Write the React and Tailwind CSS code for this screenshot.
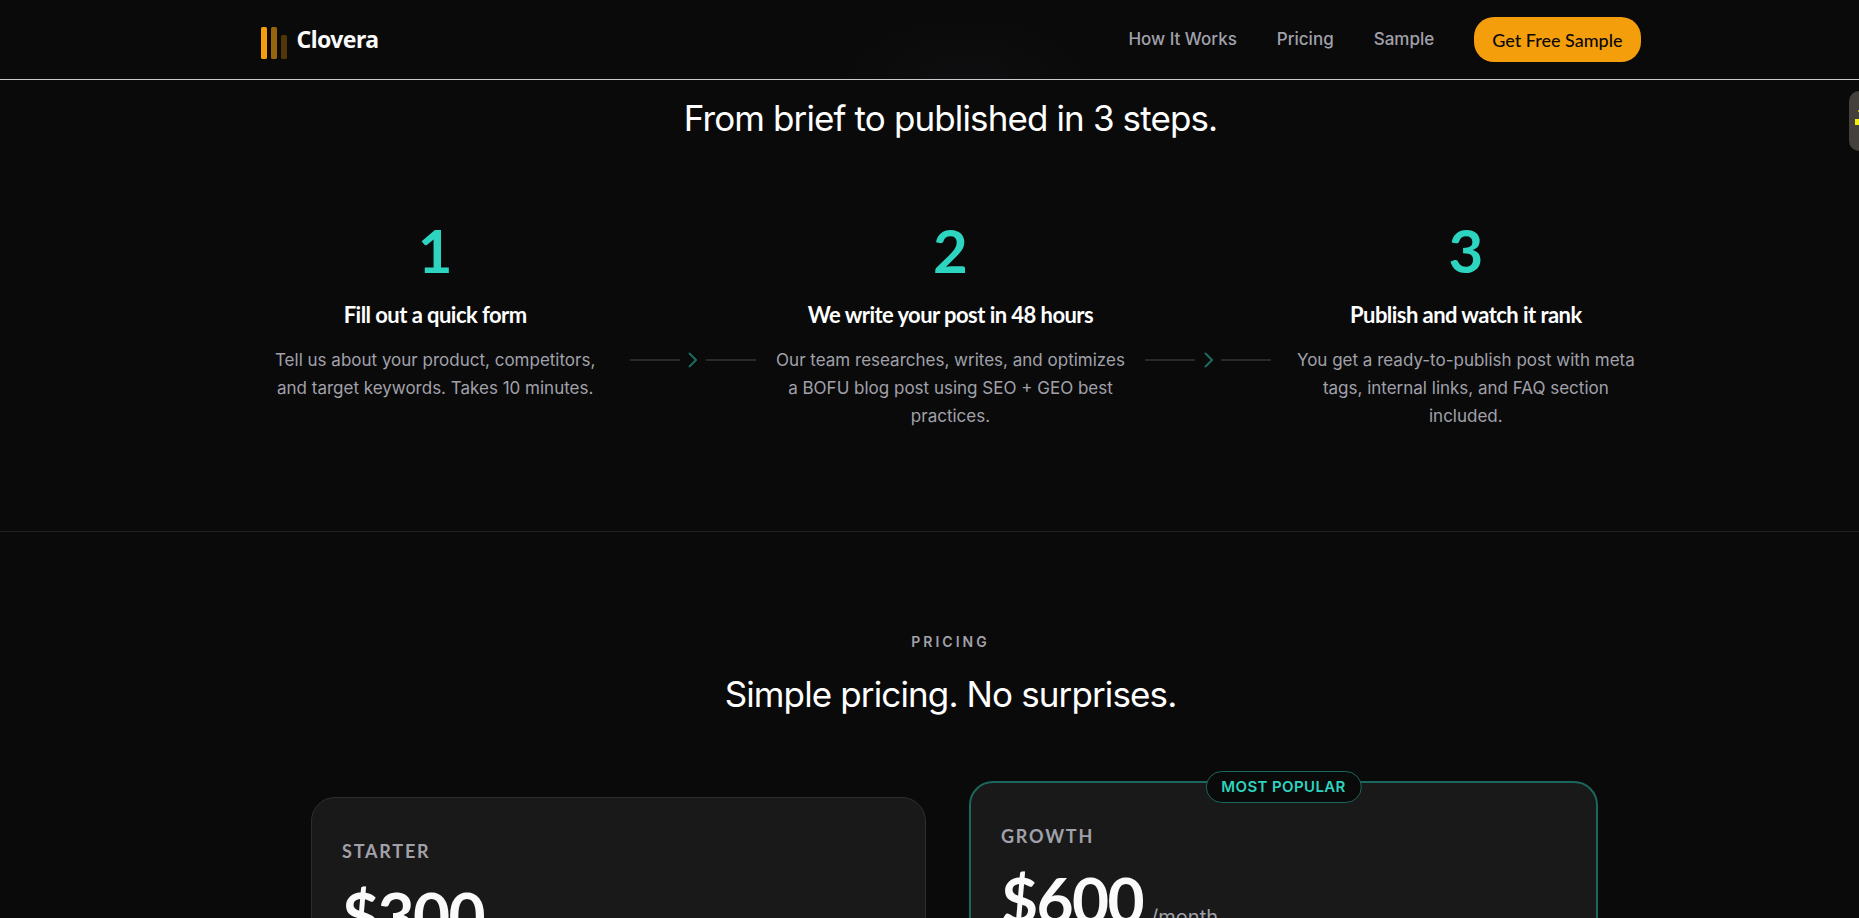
import { Fragment } from "react";
import clsx from "clsx";

const navLinks = [
  { label: "How It Works", href: "#how-it-works" },
  { label: "Pricing", href: "#pricing" },
  { label: "Sample", href: "#sample" },
];

const steps = [
  {
    title: "Fill out a quick form",
    text: "Tell us about your product, competitors, and target keywords. Takes 10 minutes.",
  },
  {
    title: "We write your post in 48 hours",
    text: "Our team researches, writes, and optimizes a BOFU blog post using SEO + GEO best practices.",
  },
  {
    title: "Publish and watch it rank",
    text: "You get a ready-to-publish post with meta tags, internal links, and FAQ section included.",
  },
];

const Logo = () => (
  <a href="#top" className="flex items-center gap-2.5">
    <svg width="26" height="32" viewBox="0 0 26 32" className="mt-1.5" aria-hidden="true">
      <rect width="6" height="32" rx="1.5" fill="#f59e0b" />
      <rect x="10" width="6" height="32" rx="1.5" fill="#f59e0b" opacity="0.6" />
      <rect x="20" y="8" width="6" height="24" rx="1.5" fill="#f59e0b" opacity="0.3" />
    </svg>
    <span className="font-['Noto_Sans',sans-serif] text-[23px] font-bold tracking-tight text-zinc-50">
      Clovera
    </span>
  </a>
);

const Header = () => (
  <header className="h-20 border-b border-[#c9cccc] bg-[#0a0a0a] bg-[radial-gradient(130px_65px_at_52%_100%,#0e0e10,#0a0a0a)] pl-[42px]">
    <div className="mx-auto flex h-full max-w-[1380px] items-center justify-between">
      <Logo />
      <nav className="flex items-center gap-10">
        {navLinks.map(({ label, href }) => (
          <a key={label} href={href} className="text-[17px] font-medium text-[#a1a1aa]">
            {label}
          </a>
        ))}
        <button className="h-[45px] rounded-[20px] bg-[#f59e0b] px-[18px] font-['Lato',sans-serif] text-lg font-medium text-[#0a0a0a]">
          Get Free Sample
        </button>
      </nav>
    </div>
  </header>
);

const StepArrow = () => (
  <div className="mx-5 mt-[70px] flex w-[126px] shrink-0 items-center justify-between">
    <span className="h-0.5 w-[50px] bg-[#2a2a2a]" />
    <svg width="9" height="16" viewBox="0 0 9 16" fill="none" aria-hidden="true">
      <path d="M1 1l7 7-7 7" stroke="#1b6b61" strokeWidth="2" />
    </svg>
    <span className="h-0.5 w-[50px] bg-[#2a2a2a]" />
  </div>
);

const Steps = () => (
  <section id="how-it-works" className="border-b border-[#222222] pt-4 pb-[101px] pl-[42px]">
    <h2 className="text-center text-[35px] leading-[44px] tracking-tight text-white">
      From brief to published in 3 steps.
    </h2>
    <div className="mx-auto mt-20 flex max-w-[1380px] items-center">
      {steps.map(({ title, text }, index) => (
        <Fragment key={title}>
          {index > 0 && <StepArrow />}
          <div className="flex-1 self-start text-center">
            <div className="font-['Lato',sans-serif] text-[60px] leading-[60px] font-bold text-[#2dd4bf]">
              {index + 1}
            </div>
            <h3 className="mt-5 font-['Lato',sans-serif] text-[22px] leading-[30px] font-bold tracking-tight text-white">
              {title}
            </h3>
            <p className="mt-4 text-[17px] leading-[28px] text-[#a1a1aa]">{text}</p>
          </div>
        </Fragment>
      ))}
    </div>
  </section>
);

const PlanCard = ({ name, price, period, popular }) => (
  <article
    className={clsx(
      "relative h-[640px] rounded-3xl border bg-[#191919] px-[30px]",
      popular ? "border-2 border-[#1b665d] pt-[41px]" : "mt-4 border-[#2e2e2e] pt-[41px]"
    )}
  >
    {popular && (
      <span className="absolute -top-3 left-1/2 -translate-x-1/2 rounded-2xl border border-[#1b665d] bg-[#0a0a0a] px-[15px] py-[5px] text-[15px] leading-5 font-semibold tracking-wide whitespace-nowrap text-[#2dd4bf]">
        MOST POPULAR
      </span>
    )}
    <h3 className="font-['Lato',sans-serif] text-lg leading-6 font-bold tracking-widest text-[#a1a1aa]">
      {name}
    </h3>
    <p className="mt-[14px] flex items-baseline gap-2">
      <span className="font-['Lato',sans-serif] text-[64px] leading-[76px] font-bold tracking-tight text-zinc-50">
        {price}
      </span>
      {period && <span className="text-xl text-[#a1a1aa]">{period}</span>}
    </p>
  </article>
);

const Pricing = () => (
  <section id="pricing" className="pt-[98px] pl-[42px]">
    <p className="text-center text-[14px] leading-6 font-semibold tracking-[3px] text-[#a1a1aa]">
      PRICING
    </p>
    <h2 className="mt-[18px] text-center text-[35px] leading-[44px] tracking-tight text-white">
      Simple pricing. No surprises.
    </h2>
    <div className="mx-auto mt-[65px] grid max-w-[1295px] grid-cols-[615fr_629fr] items-start gap-[43px] pl-2">
      <PlanCard name="STARTER" price="$300" />
      <PlanCard name="GROWTH" price="$600" period="/month" popular />
    </div>
  </section>
);

// Side tab that is tucked into the right edge of the window
const SideTab = () => (
  <button
    aria-label="Open widget"
    className="fixed top-[91px] right-0 h-[60px] w-2.5 rounded-l-[10px] bg-[#44403c]"
  >
    <svg width="4" height="16" viewBox="0 0 4 16" className="mb-1.5 ml-auto" aria-hidden="true">
      <rect x="3" width="1" height="2" fill="#b8b01a" />
      <rect y="9" width="4" height="6" fill="#f2ee10" />
    </svg>
  </button>
);

export default function App() {
  return (
    <div
      id="top"
      className="h-screen overflow-hidden bg-[#0a0a0a] font-['Inter','Liberation_Sans',sans-serif]"
    >
      <Header />
      <main>
        <Steps />
        <Pricing />
      </main>
      <SideTab />
    </div>
  );
}
